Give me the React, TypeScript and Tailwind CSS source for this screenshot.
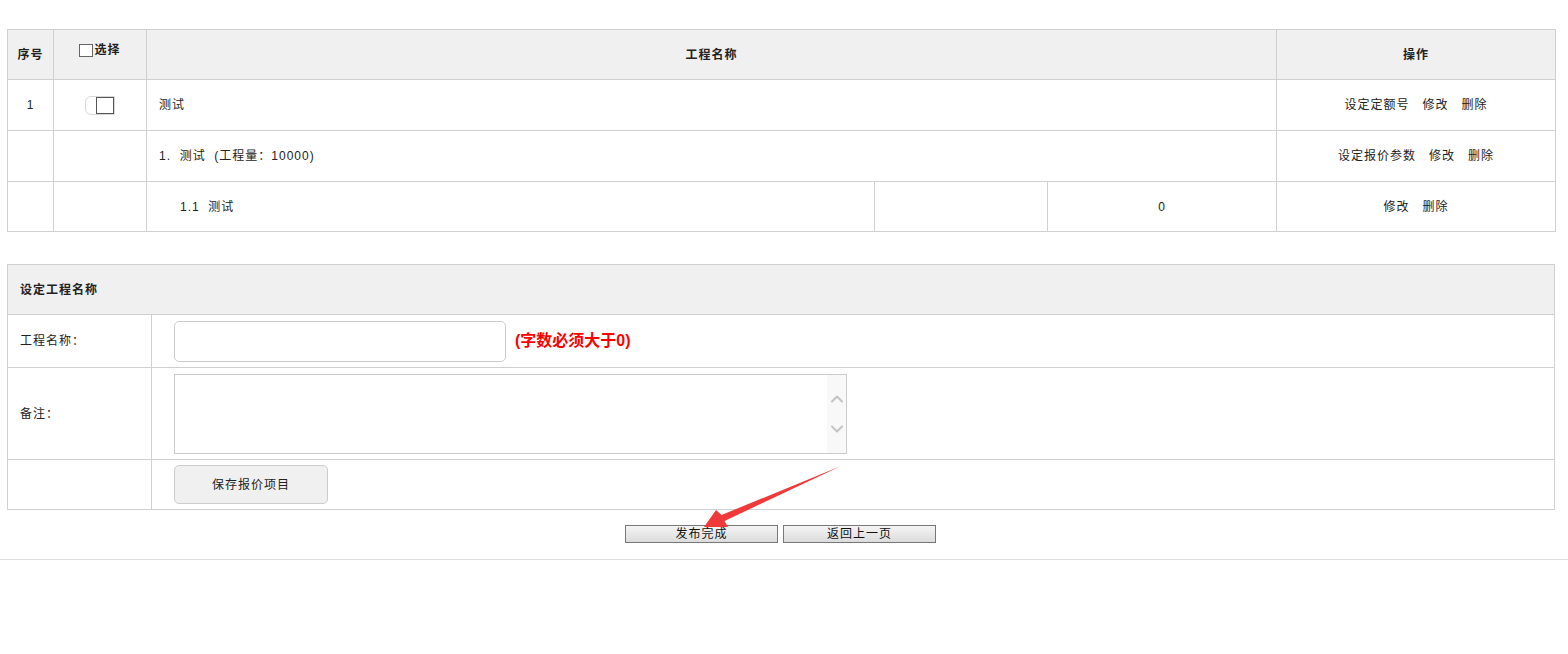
import { ChevronDown, ChevronUp } from "lucide-react";

const cell = "border border-[#d0d0d0] text-[12px] text-[#222] tracking-[1px]";

export default function App() {
  return (
    <div
      className="relative min-h-screen w-[1568px] bg-white pt-[29px]"
      style={{ fontFamily: '"Liberation Sans", "Noto Sans CJK SC", sans-serif' }}
    >
      {/* Project list */}
      <div className="pl-[7px]">
        <table className="w-[1548px] table-fixed border-collapse">
          <colgroup>
            <col className="w-[46px]" />
            <col className="w-[93px]" />
            <col className="w-[728px]" />
            <col className="w-[173px]" />
            <col className="w-[229px]" />
            <col className="w-[279px]" />
          </colgroup>
          <thead>
            <tr className="h-[50px] bg-[#f0f0f0]">
              <th className={`${cell} font-bold`}>序号</th>
              <th className={`${cell} pb-[6px] font-bold`}>
                <span className="inline-flex items-center">
                  <span className="mr-[1px] inline-block h-[13px] w-[14px] border border-[#666] bg-white" />
                  选择
                </span>
              </th>
              <th className={`${cell} font-bold`} colSpan={3}>
                工程名称
              </th>
              <th className={`${cell} font-bold`}>操作</th>
            </tr>
          </thead>
          <tbody>
            <tr className="h-[51px]">
              <td className={`${cell} text-center text-[#4a3000]`}>1</td>
              <td className={cell}>
                <div className="flex justify-center">
                  <span className="flex h-[19px] w-[30px] items-stretch justify-end rounded-l-[6px] border border-[#d8d8d8]">
                    <span className="block w-[18px] border border-[#555] bg-white" />
                  </span>
                </div>
              </td>
              <td className={`${cell} pl-[12px]`} colSpan={3}>
                测试
              </td>
              <td className={`${cell} text-center`}>
                设定定额号&nbsp;&nbsp;&nbsp;修改&nbsp;&nbsp;&nbsp;删除
              </td>
            </tr>
            <tr className="h-[51px]">
              <td className={cell} />
              <td className={cell} />
              <td className={`${cell} pl-[12px]`} colSpan={3}>
                1.&nbsp;&nbsp;测试&nbsp;&nbsp;(工程量：10000)
              </td>
              <td className={`${cell} text-center`}>
                设定报价参数&nbsp;&nbsp;&nbsp;修改&nbsp;&nbsp;&nbsp;删除
              </td>
            </tr>
            <tr className="h-[50px]">
              <td className={cell} />
              <td className={cell} />
              <td className={`${cell} pl-[33px]`}>1.1&nbsp;&nbsp;测试</td>
              <td className={cell} />
              <td className={`${cell} text-center`}>0</td>
              <td className={`${cell} text-center`}>修改&nbsp;&nbsp;&nbsp;删除</td>
            </tr>
          </tbody>
        </table>
      </div>

      {/* Edit form */}
      <div className="mt-[32px] pl-[7px]">
        <table className="w-[1548px] table-fixed border-collapse">
          <colgroup>
            <col className="w-[144px]" />
            <col />
          </colgroup>
          <tbody>
            <tr className="h-[50px] bg-[#f0f0f0]">
              <td className={`${cell} pl-[12px] font-bold`} colSpan={2}>
                设定工程名称
              </td>
            </tr>
            <tr className="h-[53px]">
              <td className={`${cell} pl-[12px]`}>工程名称：</td>
              <td className={`${cell} pl-[22px]`}>
                <div className="flex items-center">
                  <input
                    type="text"
                    className="h-[41px] w-[332px] rounded-[5px] border border-[#ccc] bg-white outline-none"
                  />
                  <span className="ml-[9px] text-[16px] font-bold tracking-normal text-[#ff0000]">
                    (字数必须大于0)
                  </span>
                </div>
              </td>
            </tr>
            <tr className="h-[92px]">
              <td className={`${cell} pl-[12px]`}>备注：</td>
              <td className={`${cell} pl-[22px]`}>
                <div className="flex h-[80px] w-[673px] border border-[#ccc] bg-white">
                  <textarea className="flex-1 resize-none border-0 outline-none" />
                  <div className="flex w-[19px] flex-col items-center justify-center gap-[10px] bg-[#f8f8f8] text-[#c4c4c4]">
                    <ChevronUp size={20} strokeWidth={2.5} />
                    <ChevronDown size={20} strokeWidth={2.5} />
                  </div>
                </div>
              </td>
            </tr>
            <tr className="h-[50px]">
              <td className={cell} />
              <td className={`${cell} pl-[22px]`}>
                <button className="h-[39px] w-[154px] rounded-[5px] border border-[#ccc] bg-[#f0f0f0] text-[12px] tracking-[1px] text-[#222]">
                  保存报价项目
                </button>
              </td>
            </tr>
          </tbody>
        </table>
      </div>

      {/* Bottom actions */}
      <div className="mt-[15px] flex justify-center gap-[5px]">
        <button className="ml-[-7px] h-[18px] w-[153px] border border-[#777] bg-gradient-to-b from-[#f4f4f4] to-[#dcdcdc] text-[12px] leading-[16px] tracking-[1px] text-[#111]">
          发布完成
        </button>
        <button className="h-[18px] w-[153px] border border-[#777] bg-gradient-to-b from-[#f4f4f4] to-[#dcdcdc] text-[12px] leading-[16px] tracking-[1px] text-[#111]">
          返回上一页
        </button>
      </div>
      <div className="mt-[16px] border-t border-[#ddd]" />

      {/* Annotation arrow */}
      <svg
        className="pointer-events-none absolute left-[698px] top-[462px]"
        width="146"
        height="70"
        viewBox="698 462 146 70"
      >
        <polygon
          points="841,466 724.5,521 728,527 704,527 716,510 721.5,515"
          fill="#f03a3a"
        />
      </svg>
    </div>
  );
}
